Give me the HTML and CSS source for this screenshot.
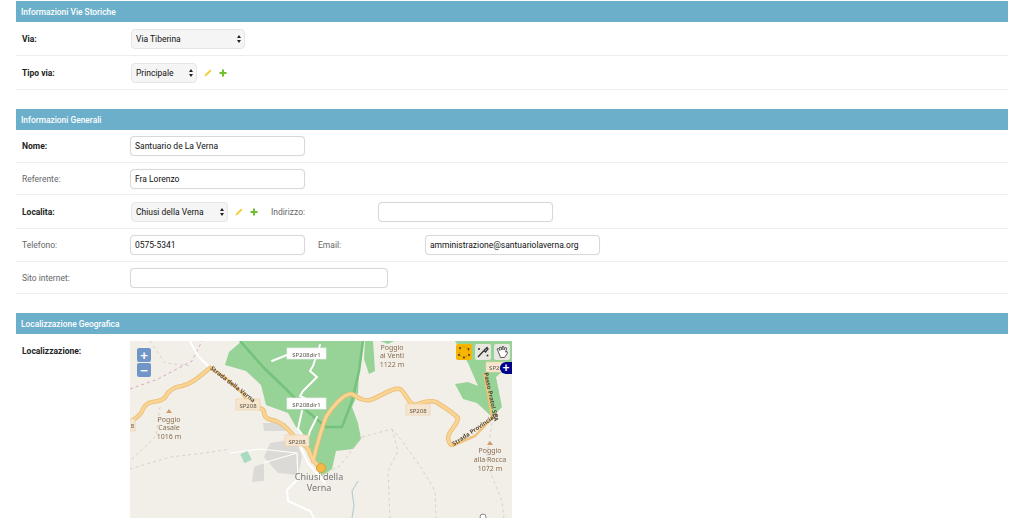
FILE: index.html
```html
<!DOCTYPE html>
<html lang="it">
<head>
<meta charset="utf-8">
<title>Santuario de La Verna</title>
<link rel="stylesheet" href="styles.css">
</head>
<body>
<form class="page">
  <section class="group">
    <h2 class="group-title">Informazioni Vie Storiche</h2>
    <div class="row r34">
      <label class="lbl req">Via:</label>
      <span class="sel w-via"><select><option>Via Tiberina</option></select></span>
    </div>
    <div class="row r34">
      <label class="lbl req">Tipo via:</label>
      <span class="sel w-tipo"><select><option>Principale</option></select></span>
      <span class="tools">
        <svg class="ico" viewBox="0 0 8 8"><path class="pen" d="M0.6 7.4 L1 5.6 L5.6 1 a0.9 0.9 0 0 1 1.4 1.4 L2.4 7 Z"/></svg>
        <svg class="ico" viewBox="0 0 8 8"><path class="plus" d="M3 0.5h2v2.5h2.5v2H5v2.5H3V5H0.5V3H3z"/></svg>
      </span>
    </div>
  </section>

  <section class="group">
    <h2 class="group-title">Informazioni Generali</h2>
    <div class="row r33">
      <label class="lbl req">Nome:</label>
      <input class="inp w-std" value="Santuario de La Verna">
    </div>
    <div class="row r32">
      <label class="lbl">Referente:</label>
      <input class="inp w-std" value="Fra Lorenzo">
    </div>
    <div class="row r34">
      <label class="lbl req">Localita:</label>
      <span class="sel w-loc"><select><option>Chiusi della Verna</option></select></span>
      <span class="tools">
        <svg class="ico" viewBox="0 0 8 8"><path class="pen" d="M0.6 7.4 L1 5.6 L5.6 1 a0.9 0.9 0 0 1 1.4 1.4 L2.4 7 Z"/></svg>
        <svg class="ico" viewBox="0 0 8 8"><path class="plus" d="M3 0.5h2v2.5h2.5v2H5v2.5H3V5H0.5V3H3z"/></svg>
      </span>
      <label class="lbl lbl-in after-tools">Indirizzo:</label>
      <input class="inp w-std">
    </div>
    <div class="row r33">
      <label class="lbl">Telefono:</label>
      <input class="inp w-std" value="0575-5341">
      <label class="lbl lbl-in after-inp">Email:</label>
      <input class="inp w-std" value="amministrazione@santuariolaverna.org">
    </div>
    <div class="row r32">
      <label class="lbl">Sito internet:</label>
      <input class="inp w-site">
    </div>
  </section>

  <section class="group">
    <h2 class="group-title">Localizzazione Geografica</h2>
    <div class="map-row">
      <label class="lbl req">Localizzazione:</label>
      <div class="map">
        <svg class="map-svg" viewBox="0 0 382 177" width="382" height="177">
          <rect width="382" height="177" fill="#f2efe9"/>
          <!-- forest -->
          <path class="wood" d="M112 0H233L229 30L228 52L222 66L228 82L231 98L223 108L206 110L202 128L192 135L181 118L176 98L166 86L158 72L136 64L131 44L116 30L95 24L99 11Z"/>
          <path class="wood" d="M235 0H243L245 30L239 33L234 18Z"/>
          <path class="wood" d="M250 0H264L258 3Z"/>
          <path class="wood" d="M325 0H382V22L366 36L372 66L362 76L347 62L333 58L325 43L338 41L348 45L338 22Z"/>
          <path class="bound" d="M110 0L134 27L160 52L177 70L196 86L212 86L222 60L229 30L233 0"/>
          <!-- town -->
          <path class="town" d="M133 82L156 82L158 90L134 90Z"/>
          <path class="town" d="M140 102L166 98L172 116L168 134L148 132L134 116Z"/>
          <path class="town" d="M124 126L134 122L134 140L122 141Z"/>
          <rect x="112" y="111" width="8" height="10" transform="rotate(-25 116 116)" fill="#a8dcc0"/>
          <!-- paths -->
          <path class="trail pink" d="M0 48L28 38L62 20L72 0"/>
          <path class="trail" d="M20 0L35 22L62 25"/>
          <path class="trail" d="M0 128L40 116L75 112L100 108"/>
          <path class="trail" d="M30 66L26 95L0 120"/>
          <path class="trail" d="M232 96L262 88L272 100L290 125L305 150L306 177"/>
          <path class="trail" d="M262 88L268 110L258 130L260 177"/>
          <path class="trail" d="M232 96L210 125L190 135"/>
          <path class="trail" d="M362 82L356 120L372 160L374 177"/>
          <path class="stream" d="M228 140L222 150L224 165L222 177"/>
          <!-- white roads -->
          <path class="wroad" d="M60 0L68 15L80 27"/>
          <path class="wroad" d="M142 20L157 14L178 10M190 4L183 25L180 30L187 36L173 50L170 55L180 60"/>
          <path class="wroad" d="M187 76L180 90L177 100L168 88L172 70"/>
          <path class="wroad" d="M168 100L178 122L195 142"/>
          <path class="wroad" d="M167 139L157 149L158 160L180 170L184 177"/>
          <path class="wroad thin" d="M100 112L130 108L167 112M133 122L167 112M167 112L168 139"/>
          <!-- orange roads -->
          <g class="casing">
            <path d="M0 81C5 78 8 76 11 72C14 66 16 62 22 61C28 60 33 60 36 55C39 49 44 46 52 45C62 43 70 35 80 27"/>
            <path d="M117 63C125 66 132 66 134 70C134 76 136 78 146 80C156 84 162 92 167 100C172 103 177 104 179 110C181 116 184 122 190 126"/>
            <path d="M183 120C186 108 190 92 196 76C202 66 214 52 222 53C230 58 234 60 240 59C250 56 262 46 270 48C276 52 278 62 284 64C290 63 298 58 306 61C314 66 324 72 328 77C328 84 318 90 318 97C319 102 320 104 322 104"/>
          </g>
          <g class="oroad">
            <path d="M0 81C5 78 8 76 11 72C14 66 16 62 22 61C28 60 33 60 36 55C39 49 44 46 52 45C62 43 70 35 80 27"/>
            <path d="M117 63C125 66 132 66 134 70C134 76 136 78 146 80C156 84 162 92 167 100C172 103 177 104 179 110C181 116 184 122 190 126"/>
            <path d="M183 120C186 108 190 92 196 76C202 66 214 52 222 53C230 58 234 60 240 59C250 56 262 46 270 48C276 52 278 62 284 64C290 63 298 58 306 61C314 66 324 72 328 77C328 84 318 90 318 97C319 102 320 104 322 104"/>
          </g>
          <path class="broad" d="M80 27L96 37L112 52L117 60"/>
          <path class="broad" d="M322 105L345 95L362 77"/>
          <path class="broad" d="M362 77L358 52L354 32"/>
          <circle cx="191" cy="127" r="4.500" fill="#f5b94a" stroke="#dd9f3a"/>
          <circle cx="353" cy="176" r="3" fill="#fff" stroke="#888"/>
          <!-- road labels -->
          <g class="shield"><rect x="-2" y="78" width="7" height="12"/><text x="2.500" y="87">8</text></g>
          <g class="shield"><rect x="106" y="58" width="24" height="11"/><text x="118" y="66.500">SP208</text></g>
          <g class="shield"><rect x="155" y="94" width="24" height="11"/><text x="167" y="102.500">SP208</text></g>
          <g class="shield"><rect x="276" y="63" width="24" height="11"/><text x="288" y="71.500">SP208</text></g>
          <g class="shield"><rect x="356" y="21" width="20" height="10"/><text x="366" y="28.500">SP20</text></g>
          <g class="shield dir"><rect x="157" y="7" width="39" height="11"/><text x="176.500" y="15.500">SP208dir1</text></g>
          <g class="shield dir"><rect x="157" y="57" width="39" height="11"/><text x="176.500" y="65.500">SP208dir1</text></g>
          <text class="rname" transform="translate(80 28) rotate(38)">Strada della Verna</text>
          <text class="rname" transform="translate(324 105) rotate(-34)">Strada Provinciale</text>
          <text class="rname" transform="translate(354 32) rotate(78)">Passo Pratol SCA</text>
          <!-- peaks -->
          <path class="peak" d="M36 72l3-4l3 4z"/>
          <text class="place" x="39" y="81">Poggio</text>
          <text class="place" x="39" y="89">Casale</text>
          <text class="place" x="39" y="98">1016 m</text>
          <text class="place" x="262" y="9">Poggio</text>
          <text class="place" x="262" y="17">ai Venti</text>
          <text class="place" x="262" y="26">1122 m</text>
          <path class="peak" d="M357 104l3-4l3 4z"/>
          <text class="place" x="360" y="112">Poggio</text>
          <text class="place" x="360" y="121">alla Rocca</text>
          <text class="place" x="360" y="130">1072 m</text>
          <text class="town-name" x="189" y="139">Chiusi della</text>
          <text class="town-name" x="189" y="150">Verna</text>
        </svg>
        <div class="zoom">
          <button type="button" class="zbtn">+</button>
          <button type="button" class="zbtn">−</button>
        </div>
        <div class="draw">
          <span class="dbtn on">
            <svg viewBox="0 0 16 16" width="16" height="16"><path d="M4 4L8 2.500L12.500 5L13 11L8 13.500L3 11Z" fill="#f7b500" stroke="#c98a00" stroke-dasharray="1.500 2"/><g fill="#333"><circle cx="4" cy="4" r=".9"/><circle cx="12.500" cy="5" r=".9"/><circle cx="13" cy="11" r=".9"/><circle cx="3" cy="11" r=".9"/><circle cx="8" cy="13.500" r=".9"/></g></svg>
          </span>
          <span class="dbtn">
            <svg viewBox="0 0 16 16" width="16" height="16"><path d="M3 13L9 6.500M9 6.500L12 3.500L13 5L10.500 8L9 6.500" fill="none" stroke="#333" stroke-width="1.300"/><circle cx="12.500" cy="11.500" r="1" fill="#333"/><circle cx="4" cy="5" r="1" fill="#333"/></svg>
          </span>
          <span class="dbtn">
            <svg viewBox="0 0 16 16" width="16" height="16"><path d="M4 7L3 5L4.500 4.500L6 6.500L5.500 3.500L7 3L8 6L8.500 2.500L10 2.800L10 6L11.500 3.500L12.800 4.300L11.500 8L13 7.500L13.500 9L10.500 13.500H6.500Z" fill="#fff" stroke="#333" stroke-width=".8"/></svg>
          </span>
        </div>
        <span class="more">+</span>
      </div>
    </div>
  </section>
</form>
</body>
</html>
```
FILE: styles.css
```css
* { box-sizing: border-box; }
html, body { margin: 0; height: 518px; overflow: hidden; background: #fff; }
body { font-family: Roboto, "Liberation Sans", sans-serif; font-size: 8.5px; color: #333; }
.page { padding: 1px 16px 0; display: flex; flex-direction: column; gap: 19px; }
.group-title {
  margin: 0; height: 21px; padding: 0 5px; background: #6cafcb; color: #fff;
  font-size: 8.4px; font-weight: 500; line-height: 23px;
}
.row { display: flex; align-items: center; border-bottom: 1px solid #eee; padding-left: 6px; }
.r32 { height: 32px; }
.r33 { height: 33px; }
.r34 { height: 34px; }
.lbl { width: 108px; flex: none; font-size: 8.5px; color: #666; }
.req { color: #222; font-weight: 700; }
.lbl-in { width: 107px; }
.after-tools { margin-left: 13px; }
.after-inp { margin-left: 13px; }
.inp {
  height: 20px; padding: 0 4px; border: 1px solid #d8d8d8; border-radius: 4px; background: #fff;
  font: 400 8.5px Roboto, "Liberation Sans", sans-serif; color: #111; outline: none;
  box-shadow: 0 0 1px #e4e4e4;
}
.w-std { width: 175px; }
.w-site { width: 258px; }
.sel { position: relative; display: block; height: 20px; margin-left: 1px; }
.sel select {
  appearance: none; -webkit-appearance: none; width: 100%; height: 100%; padding: 0 4px;
  border: 1px solid #e6e6e6; border-radius: 4px; background: #f5f5f5;
  font: 400 8.5px Roboto, "Liberation Sans", sans-serif; color: #111; outline: none;
}
.sel::before, .sel::after {
  content: ""; position: absolute; right: 4px; width: 0; height: 0;
  border-left: 2px solid transparent; border-right: 2px solid transparent;
}
.sel::before { top: 6px; border-bottom: 3px solid #222; }
.sel::after { top: 11px; border-top: 3px solid #222; }
.w-via { width: 114px; }
.w-tipo { width: 66px; }
.w-loc { width: 97px; }
.tools { display: flex; gap: 7px; margin-left: 7px; }
.ico { width: 8px; height: 8px; display: block; }
.pen { fill: #f2cf3f; }
.plus { fill: #6fbf2f; }
.map-row { display: flex; padding: 7px 0 0 6px; }
.map-row .lbl { padding-top: 5px; }
.map { position: relative; width: 382px; height: 177px; overflow: hidden; flex: none; }
.map-svg { display: block; font-family: "Noto Sans", "DejaVu Sans", sans-serif; filter: blur(.35px); }
.wood { fill: #97d297; }
.bound { fill: none; stroke: #74c27c; stroke-width: 2.500; stroke-linejoin: round; }
.town { fill: #dcdad7; }
.trail { fill: none; stroke: #d8d3c6; stroke-width: 1; stroke-dasharray: 3 3; }
.trail.pink { stroke: #d9a8c4; }
.stream { fill: none; stroke: #a8cccc; stroke-width: 1; }
.wroad { fill: none; stroke: #fff; stroke-width: 2; stroke-linejoin: round; stroke-linecap: round; }
.wroad.thin { stroke-width: 1.200; }
.casing path { fill: none; stroke: #edbc76; stroke-width: 4.500; stroke-linejoin: round; stroke-linecap: round; }
.oroad path { fill: none; stroke: #f8d592; stroke-width: 2.800; stroke-linejoin: round; stroke-linecap: round; }
.broad { fill: none; stroke: #f0c27a; stroke-width: 2.500; }
.shield rect { fill: #f7e6cf; stroke: #ecd0a8; stroke-width: .7; }
.shield text { font-size: 6px; fill: #5d5346; text-anchor: middle; }
.shield.dir rect { fill: #fff; stroke: #eee; }
.rname { font-size: 6px; fill: #5b4a30; font-weight: 700; }
.peak { fill: #d09a6c; }
.place { font-size: 7px; fill: #8a6d50; text-anchor: middle; }
.town-name { font-size: 9px; fill: #777; text-anchor: middle; }
.zoom {
  position: absolute; left: 7px; top: 7px; width: 14px; display: flex; flex-direction: column; gap: 1px;
}
.zbtn {
  width: 14px; height: 14px; padding: 0; border: 0; border-radius: 2px; background: #7096c8; color: #fff;
  font: 700 13px/13px "Liberation Sans", sans-serif;
}
.draw { position: absolute; left: 326px; top: 3px; display: flex; gap: 3px; }
.dbtn { display: block; width: 16px; height: 16px; background: #e8e8e0; border-radius: 2px; }
.dbtn.on { background: #f7b500; }
.dbtn svg { display: block; }
.more {
  position: absolute; right: 0; top: 21px; width: 12px; height: 12px; border-radius: 6px 0 0 6px;
  background: #00008b; color: #fff; font: 700 12px/12px "Liberation Sans", sans-serif; text-align: center;
}
```
